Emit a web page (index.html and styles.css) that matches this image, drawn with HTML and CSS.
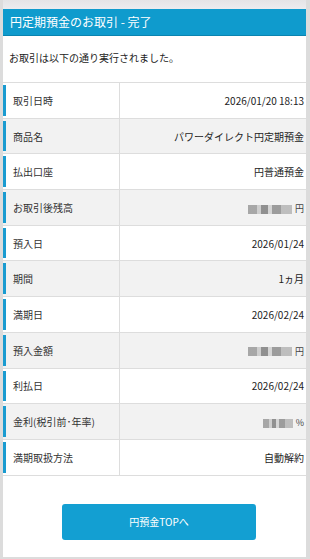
FILE: index.html
```html
<!DOCTYPE html>
<html lang="ja">
<head>
<meta charset="utf-8">
<link rel="stylesheet" href="styles.css">
</head>
<body>
<div class="frame">
  <div class="topband"></div>
  <h1 class="title">円定期預金のお取引 - 完了</h1>
  <p class="lead">お取引は以下の通り実行されました。</p>
  <table class="info">
    <tr><th>取引日時</th><td>2026/01/20 18:13</td></tr>
    <tr class="alt"><th>商品名</th><td>パワーダイレクト円定期預金</td></tr>
    <tr><th>払出口座</th><td>円普通預金</td></tr>
    <tr class="alt"><th>お取引後残高</th><td><span class="mosaic m1"></span><span class="unit">円</span></td></tr>
    <tr><th>預入日</th><td>2026/01/24</td></tr>
    <tr class="alt"><th>期間</th><td>1ヵ月</td></tr>
    <tr><th>満期日</th><td>2026/02/24</td></tr>
    <tr class="alt"><th>預入金額</th><td><span class="mosaic m1"></span><span class="unit">円</span></td></tr>
    <tr><th>利払日</th><td>2026/02/24</td></tr>
    <tr class="alt"><th>金利(税引前･年率)</th><td><span class="mosaic m2"></span><span class="unit">%</span></td></tr>
    <tr><th>満期取扱方法</th><td>自動解約</td></tr>
  </table>
  <div class="actions">
    <button class="btn">円預金TOPへ</button>
  </div>
</div>
</body>
</html>
```

FILE: styles.css
```css
html, body {
  margin: 0;
  padding: 0;
  background: #ffffff;
}
body {
  font-family: "Noto Sans CJK JP", "Noto Sans", sans-serif;
  color: #333333;
}
.frame {
  width: 310px;
  height: 559px;
  box-sizing: border-box;
  border-left: 3px solid #dcdcdc;
  border-right: 4px solid #dcdcdc;
  border-bottom: 2px solid #dcdcdc;
  background: #ffffff;
  display: flex;
  flex-direction: column;
}
.topband {
  height: 9px;
  background: linear-gradient(#e4e4e6, #ececef);
}
.title {
  margin: 0;
  height: 27px;
  line-height: 26px;
  background: #0f9bcd;
  border-bottom: 1px solid #0a84b0;
  color: #ffffff;
  font-size: 12px;
  font-weight: normal;
  padding-left: 7px;
  box-sizing: border-box;
}
.lead {
  margin: 0;
  padding: 14px 0 0 6px;
  height: 46px;
  box-sizing: border-box;
  font-size: 10px;
  color: #222;
}
.info {
  width: 100%;
  border-collapse: collapse;
  border-top: 1px solid #dddddd;
}
.info tr {
  height: 35.7px;
  border-bottom: 1px solid #dddddd;
}
.info tr.alt {
  background: #f2f2f2;
}
.info th {
  width: 106px;
  text-align: left;
  font-weight: normal;
  font-size: 10px;
  color: #333;
  padding: 0 0 0 10px;
  border-right: 1px solid #dddddd;
  position: relative;
  white-space: nowrap;
}
.info th::before {
  content: "";
  position: absolute;
  left: 0;
  top: 2px;
  bottom: 2px;
  width: 3px;
  background: #1a9bd0;
}
.info td {
  text-align: right;
  font-size: 10px;
  color: #222;
  padding: 0 2px 0 0;
  white-space: nowrap;
}
.mosaic {
  display: inline-block;
  vertical-align: middle;
  height: 9px;
  background:
    linear-gradient(90deg, #9a9a9a 0 20%, #c8c8c8 20% 30%, #7f7f7f 30% 45%, #d0d0d0 45% 55%, #8d8d8d 55% 75%, #b5b5b5 75% 100%);
  opacity: 0.85;
}
.m1 { width: 44px; }
.m2 { width: 30px; }
.unit {
  margin-left: 3px;
  font-size: 9px;
  color: #444;
}
.actions {
  display: flex;
  justify-content: center;
  padding-top: 28px;
  padding-left: 9px;
}
.btn {
  width: 194px;
  height: 36px;
  border: none;
  border-radius: 3px;
  background: #139fd2;
  color: #ffffff;
  font-family: "Noto Sans CJK JP", "Noto Sans", sans-serif;
  font-size: 10px;
}
```
